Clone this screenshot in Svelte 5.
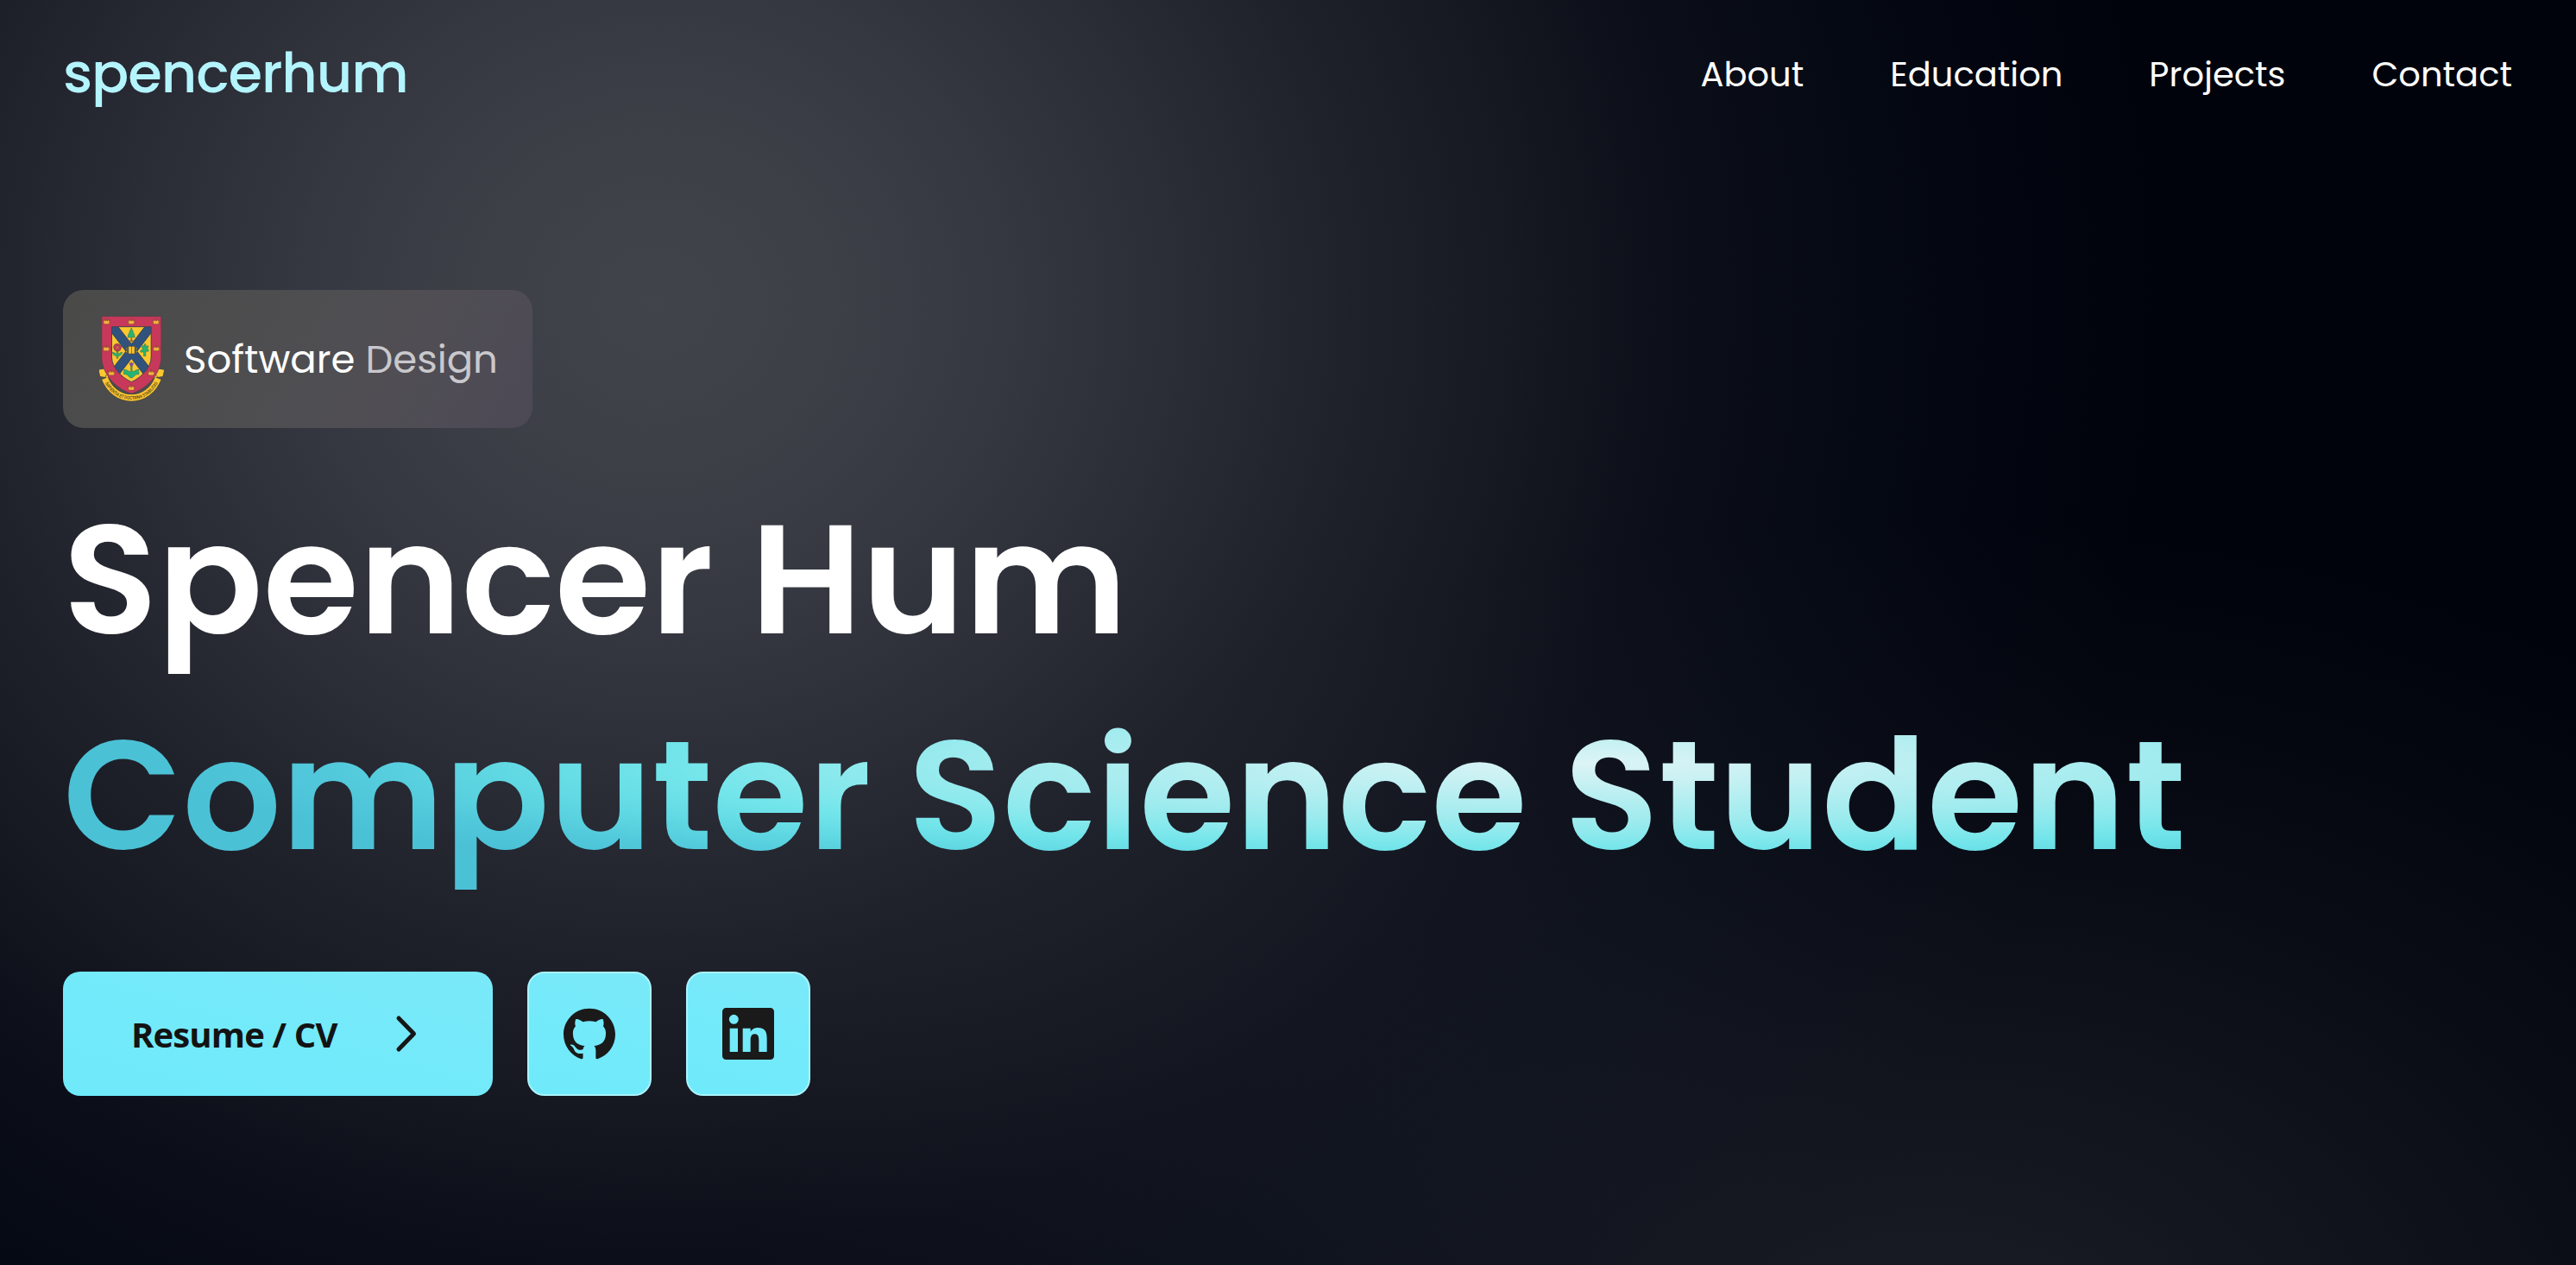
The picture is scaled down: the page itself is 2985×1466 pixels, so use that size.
<script>
  const links = ['About', 'Education', 'Projects', 'Contact'];

  // Crown positions on the red border of the crest
  const crowns = [
    [73, 54], [159, 54], [245, 54],
    [72, 147], [246, 147],
    [90, 232], [228, 232],
    [159, 284]
  ];
</script>

<div class="page">
  <header>
    <a class="logo" href="#home">spencerhum</a>
    <nav>
      {#each links as link}
        <a href="#{link.toLowerCase()}">{link}</a>
      {/each}
    </nav>
  </header>

  <main>
    <div class="badge">
      <svg class="crest" viewBox="48 34 230 300" aria-hidden="true">
        <path d="M46 222L73 218L79 240L68 247L51 244Z M273 222L246 218L240 240L251 247L268 244Z" fill="#fdc72f" />
        <path d="M68 244L77 238L82 249L74 254Z M250 244L241 238L236 249L244 254Z" fill="#fdc72f" stroke="#46443f" stroke-width="2" />
        <path d="M56 36H263V175C263 238 213 287 159.500 305C106 287 56 238 56 175Z" fill="#c8385a" stroke="#55404a" stroke-width="2" />
        <clipPath id="field"><path d="M91 72H228V178C228 212 196 247 159.500 264C123 247 91 212 91 178Z" /></clipPath>
        <g clip-path="url(#field)">
          <rect x="90" y="70" width="140" height="200" fill="#fdc72f" />
          <path d="M80 54L240 262M239 54L79 262" stroke="#40434c" stroke-width="33" />
          <path d="M80 54L240 262M239 54L79 262" stroke="#30527c" stroke-width="29" />
        </g>
        <path d="M91 72H228V178C228 212 196 247 159.500 264C123 247 91 212 91 178Z" fill="none" stroke="#46434c" stroke-width="3" />

        <g fill="#24b574" stroke="#3a6b48" stroke-width="1.500">
          <path d="M159 76L166 90L164 90L171 101L168 101L172 109H146L150 101L147 101L154 90L152 90Z" />
          <path d="M200 150C192 145 196 133 205 140C200 128 214 128 208 141C218 133 224 144 212 148C224 150 220 164 209 156L209 174H202V158C193 166 184 156 196 152Z" />
          <path d="M157 202H162V228C172 228 176 218 186 222C180 226 190 231 184 238C174 234 170 246 161 250H157C148 246 144 234 134 238C128 231 138 226 132 222C142 218 146 228 157 228Z" />
          <path d="M108 153H113V166C120 166 120 159 128 161C126 170 119 174 113 174V182H108V174C101 174 95 170 93 161C101 159 102 166 108 166Z" />
        </g>
        <path d="M157 109H162V117L167 120L159 126L152 120L157 117Z" fill="#9a6a3c" />
        <path d="M110 131L119 134L125 143L120 154L110 158L101 153L97 143L101 134Z" fill="#c8385a" stroke="#5a4330" stroke-width="2" />
        <circle cx="111" cy="144" r="5" fill="#e06a5a" stroke="#5a4330" />
        <path d="M151 195L156 199L159 193L163 199L168 195L165 206C163 211 156 211 154 206Z" fill="#7c4ea6" />
        <path d="M149 140H158L160 142L162 140H171V166H149Z M144 144L140 148L144 153L140 159L144 163M176 144L180 148L176 153L180 159L176 163" fill="#fdc72f" stroke="#5b4c2a" stroke-width="2" />
        <path d="M160 141V166" stroke="#5b4c2a" stroke-width="2" />

        {#each crowns as [x, y]}
          <path
            transform="translate({x} {y})"
            d="M-13 -7L-8 -1L-6 -9L-2 -2L0 -11L2 -2L6 -9L8 -1L13 -7L9 9H-9Z"
            fill="#f0b23a"
            stroke="#7a3038"
            stroke-width="1.500"
          />
        {/each}

        <path d="M67 252C84 294 118 319 159.500 319C201 319 235 294 252 252" fill="none" stroke="#4a463c" stroke-width="25" />
        <path d="M67 252C84 294 118 319 159.500 319C201 319 235 294 252 252" fill="none" stroke="#fdc72f" stroke-width="22" />
        <path id="scroll" d="M62 257C82 301 116 325 159.500 325C203 325 237 301 257 257" fill="none" />
        <text class="motto"><textPath href="#scroll" startOffset="50%" text-anchor="middle" textLength="228" lengthAdjust="spacingAndGlyphs">SAPIENTIA ET DOCTRINA STABILITAS</textPath></text>
      </svg>
      <p>Software <span>Design</span></p>
    </div>

    <h1>
      <span class="line">Spencer Hum</span>
      <span class="line title">Computer Science Student</span>
    </h1>

    <div class="actions">
      <a class="button resume" href="#resume">
        <span>Resume / CV</span>
        <svg viewBox="0 0 32 48" aria-hidden="true">
          <path d="M7 6L24.500 24L7 42" fill="none" stroke="#161616" stroke-width="5" stroke-linecap="round" stroke-linejoin="round" />
        </svg>
      </a>
      <a class="button square" href="#github" aria-label="GitHub">
        <svg viewBox="0 0 24 24">
          <path fill="#1a1a1a" d="M12 .297c-6.630 0-12 5.373-12 12 0 5.303 3.438 9.800 8.205 11.385.6.113.82-.258.82-.577 0-.285-.01-1.040-.015-2.040-3.338.724-4.042-1.610-4.042-1.610C4.422 18.070 3.633 17.700 3.633 17.700c-1.087-.744.084-.729.084-.729 1.205.084 1.838 1.236 1.838 1.236 1.070 1.835 2.809 1.305 3.495.998.108-.776.417-1.305.76-1.605-2.665-.3-5.466-1.332-5.466-5.930 0-1.310.465-2.380 1.235-3.220-.135-.303-.54-1.523.105-3.176 0 0 1.005-.322 3.300 1.230.96-.267 1.980-.399 3-.405 1.020.006 2.040.138 3 .405 2.280-1.552 3.285-1.230 3.285-1.230.645 1.653.24 2.873.12 3.176.765.84 1.230 1.910 1.230 3.220 0 4.610-2.805 5.625-5.475 5.920.42.36.81 1.096.81 2.220 0 1.606-.015 2.896-.015 3.286 0 .315.21.69.825.57C20.565 22.092 24 17.592 24 12.297c0-6.627-5.373-12-12-12" />
        </svg>
      </a>
      <a class="button square" href="#linkedin" aria-label="LinkedIn">
        <svg viewBox="0 0 180 180">
          <path
            fill="#1a1a1a"
            fill-rule="evenodd"
            d="M13 0H167A13 13 0 0 1 180 13V167A13 13 0 0 1 167 180H13A13 13 0 0 1 0 167V13A13 13 0 0 1 13 0ZM40 23.500A16.500 16.500 0 1 0 40 56.500A16.500 16.500 0 1 0 40 23.500ZM26 71V153H54V71ZM71 71V153H98V113C98 101 101 91 113 91C126 91 127 103 127 114V153H155V108C155 84 149 69 124 69C110 69 102 76 98 83V71Z"
          />
        </svg>
      </a>
    </div>
  </main>
</div>

<style>
  :global(body) {
    background: #01020b;
  }

  .page {
    box-sizing: border-box;
    min-height: 1466px;
    padding: 0 74px 0 73px;
    overflow: hidden;
    font-family: Poppins, Inter, sans-serif;
    color: #fff;
    background:
      radial-gradient(ellipse 1400px 1000px at 2240px 1600px, rgba(104, 108, 116, 0.25) 0%, rgba(104, 108, 116, 0.225) 13%, rgba(104, 108, 118, 0.15) 40%, rgba(104, 108, 122, 0.085) 60%, rgba(104, 108, 122, 0.03) 83%, rgba(104, 108, 122, 0) 100%),
      radial-gradient(ellipse 1740px 1620px at 760px 350px, #42444b 0%, #3d3f47 13%, #363841 23%, #2a2c36 35%, #20222b 46%, #161922 57%, #0c0f19 68%, #060a14 79%, #02050f 92%, #01030c 100%);
  }

  a {
    color: inherit;
    text-decoration: none;
  }

  header {
    display: flex;
    align-items: center;
    justify-content: space-between;
    height: 172px;
  }

  .logo {
    padding-bottom: 3px;
    font-size: 64px;
    font-weight: 500;
    letter-spacing: -1.1px;
    color: #b3f4fd;
  }

  nav {
    display: flex;
    gap: 100px;
    font-size: 40px;
  }

  main {
    padding-top: 164px;
  }

  .badge {
    box-sizing: border-box;
    display: flex;
    align-items: center;
    gap: 21px;
    width: 544px;
    height: 160px;
    padding-left: 42px;
    border-radius: 24px;
    background: linear-gradient(120deg, #4a4a49 0%, #4e4e50 45%, #504e54 70%, #4c4955 100%);
  }

  .crest {
    width: 77px;
    height: 100px;
  }

  .motto {
    font-family: "Liberation Sans", sans-serif;
    font-size: 17px;
    font-weight: 700;
    fill: #5e4d20;
  }

  .badge p {
    margin: 1px 0 0;
    font-size: 45px;
  }

  .badge span {
    color: #c9c8cc;
  }

  h1 {
    margin: 50px 0 80px;
    font-size: 180px;
    font-weight: 600;
    line-height: 250px;
  }

  .line {
    display: block;
    width: max-content;
  }

  .title {
    color: transparent;
    background: radial-gradient(ellipse 1640px 156px at 1767px 88px, #dcf4f6 0%, #c9f1f3 14%, #b4eef1 28%, #a0ebee 42%, #8ae9ed 54%, #72e5ea 65%, #5fd7e2 78%, #50c7da 91%, #4bc1d6 100%);
    background-clip: text;
  }

  .actions {
    display: flex;
    gap: 40px;
  }

  .button {
    box-sizing: border-box;
    display: flex;
    align-items: center;
    height: 144px;
    border-radius: 20px;
    background: linear-gradient(15deg, #6feafb 0%, #73eafa 50%, #7ae9f9 100%);
  }

  .resume {
    width: 498px;
    padding-left: 79px;
    font-family: "Segoe UI", "Open Sans", sans-serif;
    font-size: 40px;
    font-weight: 700;
    letter-spacing: -0.85px;
    color: #131313;
  }

  .resume svg {
    width: 32px;
    height: 48px;
    margin-left: 64px;
  }

  .square {
    justify-content: center;
    width: 144px;
    border: 2px solid #a9f3fc;
  }

  .square svg {
    width: 60px;
    height: 60px;
  }
</style>
